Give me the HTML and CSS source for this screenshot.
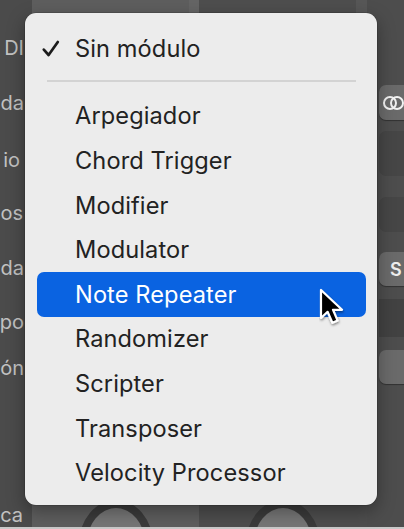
FILE: index.html
```html
<!DOCTYPE html>
<html lang="es">
<head>
<meta charset="utf-8">
<title>Menú de módulos MIDI</title>
<link rel="stylesheet" href="styles.css">
</head>
<body>
<div class="app">
  <div class="labels">
    <div class="label l1"><span>DI</span></div>
    <div class="label l2"><span>da</span></div>
    <div class="label l3"><span>io</span></div>
    <div class="label l4"><span>os</span></div>
    <div class="label l5"><span>da</span></div>
    <div class="label l6"><span>po</span></div>
    <div class="label l7"><span>ón</span></div>
    <div class="label l8"><span>ca</span></div>
  </div>
  <div class="vline"></div>
  <div class="strips">
    <div class="strip strip-a">
      <div class="strip-top"><div class="top-main"></div><div class="top-edge"></div></div>
      <div class="strip-body"></div>
      <div class="strip-bottom"><div class="knob"></div></div>
    </div>
    <div class="strip strip-b">
      <div class="strip-top"><div class="top-main"></div><div class="top-edge"></div></div>
      <div class="strip-body"></div>
      <div class="strip-bottom"><div class="knob"></div></div>
    </div>
  </div>
  <div class="rline"></div>
  <div class="rcol">
    <div class="rbtn light b1">
      <svg class="rings" width="24" height="16" viewBox="0 0 24 16"><circle cx="8" cy="8" r="6" fill="none" stroke="#f2f2f2" stroke-width="2"/><circle cx="15" cy="8" r="6" fill="none" stroke="#f2f2f2" stroke-width="2"/></svg>
    </div>
    <div class="rbtn dark b2"></div>
    <div class="rbtn dark b3"></div>
    <div class="rbtn light b4"><span class="rtext">S</span></div>
    <div class="rbtn darker b5"></div>
    <div class="rbtn light b6"></div>
  </div>
</div>
<div class="bottomline"></div>

<div class="menu">
  <div class="item checked">
    <svg class="check" width="20" height="20" viewBox="0 0 20 20"><path d="M2.8 10.6 L7.6 16 L16.8 3" fill="none" stroke="#1c1c1c" stroke-width="2.7" stroke-linecap="round" stroke-linejoin="round"/></svg>
    <span class="text">Sin módulo</span>
  </div>
  <div class="sep"></div>
  <div class="item"><span class="text">Arpegiador</span></div>
  <div class="item"><span class="text">Chord Trigger</span></div>
  <div class="item"><span class="text">Modifier</span></div>
  <div class="item"><span class="text">Modulator</span></div>
  <div class="item active"><span class="text">Note Repeater</span></div>
  <div class="item"><span class="text">Randomizer</span></div>
  <div class="item"><span class="text">Scripter</span></div>
  <div class="item"><span class="text">Transposer</span></div>
  <div class="item"><span class="text">Velocity Processor</span></div>
</div>

<svg class="cursor" width="30" height="42" viewBox="0 0 30 42">
  <defs>
    <filter id="sh" x="-30%" y="-30%" width="160%" height="160%">
      <feDropShadow dx="0.5" dy="1.5" stdDeviation="1.2" flood-color="#000" flood-opacity="0.45"/>
    </filter>
  </defs>
  <path d="M2 2 L2 30 L8.6 23.8 L13.4 34.8 L18.6 32.6 L14 21.8 L23 21.8 Z" fill="#000" stroke="#fff" stroke-width="2.2" stroke-linejoin="round" filter="url(#sh)"/>
</svg>
</body>
</html>
```

FILE: styles.css
```css
html, body {
  margin: 0;
  padding: 0;
}
body {
  width: 404px;
  height: 529px;
  overflow: hidden;
  position: relative;
  background: #4a4a4a;
  font-family: Inter, "Liberation Sans", Arial, sans-serif;
}
.app {
  display: flex;
  height: 527px;
}
.labels {
  width: 32px;
  display: flex;
  flex-direction: column;
  background: #4b4b4b;
}
.label {
  height: 24px;
  display: flex;
  justify-content: flex-end;
  white-space: nowrap;
  color: #c2c2c2;
  font-size: 20px;
  line-height: 24px;
  padding-right: 8px;
}
.l1 { margin-top: 36px; }
.l2 { margin-top: 31px; }
.l3 { margin-top: 33px; padding-right: 12px; }
.l4 { margin-top: 29px; padding-right: 9px; }
.l5 { margin-top: 31px; }
.l6 { margin-top: 30px; }
.l7 { margin-top: 22px; }
.l8 { margin-top: 123px; padding-right: 9px; }
.vline {
  width: 1px;
  background: #0e0e0e;
}
.strips {
  display: flex;
  width: 335px;
}
.strip {
  display: flex;
  flex-direction: column;
}
.strip-a { width: 167px; background: #5e5e5e; }
.strip-b { width: 168px; background: #4e4e4e; }
.strip-top {
  height: 20px;
  display: flex;
}
.top-main { flex: 1; }
.strip-a .top-edge { width: 10px; background: #656565; }
.strip-b .top-edge { width: 11px; background: #575757; }
.strip-body { flex: 1; }
.strip-bottom {
  height: 30px;
  position: relative;
  overflow: hidden;
}
.knob {
  position: absolute;
  top: 3px;
  width: 58px;
  height: 72px;
  border-radius: 50%;
  border: 8px solid #3b3b3b;
  background: #767676;
}
.strip-a .knob { left: 47px; }
.strip-b .knob { left: 47px; }
.rline {
  width: 2px;
  background: #3e3e3e;
}
.rcol {
  flex: 1;
  background: #4d4d4d;
  display: flex;
  flex-direction: column;
  padding-left: 12px;
}
.rbtn {
  border-radius: 7px 0 0 7px;
  display: flex;
  align-items: center;
  overflow: hidden;
}
.rbtn.light { background: #6a6a6a; box-shadow: 0 1px 1px rgba(0,0,0,0.35); }
.rbtn.dark { background: #464646; }
.rbtn.darker { background: #424242; border-radius: 0; }
.b1 { margin-top: 85px; height: 35px; }
.b2 { margin-top: 11px; height: 45px; }
.b3 { margin-top: 21px; height: 35px; }
.b4 { margin-top: 20px; height: 34px; }
.b5 { margin-top: 13px; height: 38px; }
.b6 { margin-top: 13px; height: 34px; }
.rings { margin-left: 3px; }
.rtext {
  color: #ededed;
  font-size: 18px;
  font-weight: 600;
  margin-left: 11px;
}
.bottomline {
  height: 2px;
  background: #c9c9c9;
}

.menu {
  position: absolute;
  left: 25px;
  top: 13px;
  width: 352px;
  height: 492px;
  box-sizing: border-box;
  padding: 13px 11px 10px 12px;
  background: #ececec;
  border-radius: 11px;
  box-shadow: 0 6px 18px rgba(0,0,0,0.35), 0 0 0 0.5px rgba(0,0,0,0.25);
  display: flex;
  flex-direction: column;
}
.item {
  height: 44.6px;
  display: flex;
  align-items: center;
  padding-left: 38px;
  position: relative;
  border-radius: 7px;
  color: #222222;
  font-size: 23.6px;
  letter-spacing: 0.1px;
}
.item.active {
  background: #0a63e1;
  color: #ffffff;
}
.check {
  position: absolute;
  left: 4px;
  top: 13px;
}
.sep {
  height: 2px;
  background: #d3d3d3;
  margin: 9px 10px 12px 10px;
}
.cursor {
  position: absolute;
  left: 319px;
  top: 288px;
}
```
